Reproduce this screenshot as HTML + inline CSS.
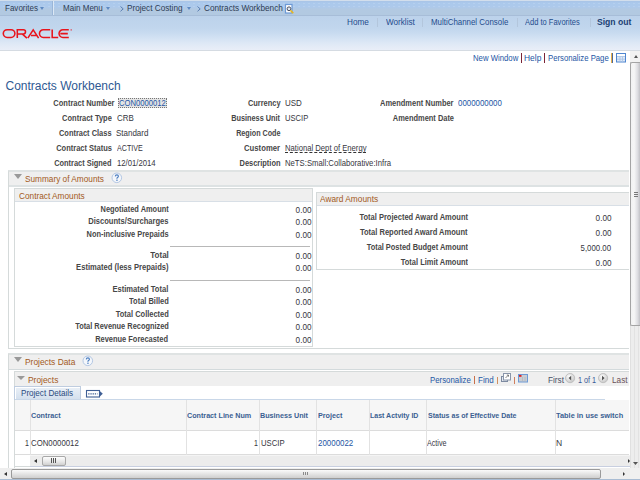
<!DOCTYPE html>
<html><head><meta charset="utf-8">
<style>
*{margin:0;padding:0;box-sizing:border-box}
html,body{width:640px;height:480px;overflow:hidden;background:#fff;font-family:"Liberation Sans",sans-serif}
.t{position:absolute;white-space:nowrap;line-height:1}
.r{position:absolute}
</style></head><body>
<div class="r" style="left:0px;top:0px;width:640px;height:16px;background:linear-gradient(#d2deec 0,#d2deec 1px,#a8c4e6 1px,#abc9ec 3px,#adc9eb 7px,#b2c9e2 9px,#b2c9e1 15px,#a7bdd8 15px,#a7bdd8 16px)"></div>
<div class="r" style="left:0px;top:3px;width:640px;height:1px;background:repeating-linear-gradient(90deg,transparent 0,transparent 3px,rgba(255,255,255,0.12) 3px,rgba(255,255,255,0.12) 5px)"></div>
<div class="r" style="left:0px;top:6px;width:640px;height:1px;background:repeating-linear-gradient(90deg,transparent 0,transparent 3px,rgba(255,255,255,0.12) 3px,rgba(255,255,255,0.12) 5px)"></div>
<div class="r" style="left:0px;top:16px;width:640px;height:34px;background:linear-gradient(#bcd2eb 0,#c1d6ed 35%,#c8dbf0 50%,#d3e2f3 65%,#dfe9f6 82%,#e9eef8 100%)"></div>
<div class="r" style="left:0px;top:50px;width:640px;height:1px;background:#d5dbe2"></div>
<div class="t" style="left:4.60px;top:4px;font-size:9px;color:#2e3d55;font-weight:normal;letter-spacing:0px;transform:scaleX(0.892);transform-origin:left;">Favorites</div>
<svg class="r" style="left:40px;top:7px" width="4" height="3"><path d="M0 0H4L2.0 3Z" fill="#5f8ac2"/></svg>
<div class="r" style="left:52px;top:1px;width:1px;height:14px;background:#9ab6d8"></div>
<div class="r" style="left:53px;top:1px;width:1px;height:14px;background:#dce8f5"></div>
<div class="t" style="left:63.40px;top:4px;font-size:9px;color:#2e3d55;font-weight:normal;letter-spacing:0px;transform:scaleX(0.894);transform-origin:left;">Main Menu</div>
<svg class="r" style="left:106px;top:7px" width="4" height="3"><path d="M0 0H4L2.0 3Z" fill="#5f8ac2"/></svg>
<svg class="r" style="left:120px;top:6px" width="5" height="6"><path d="M0.5 0.5L3.2 2.9L0.5 5.3" fill="none" stroke="#5a7fb2" stroke-width="1"/></svg>
<div class="t" style="left:127.39px;top:4px;font-size:9px;color:#2e3d55;font-weight:normal;letter-spacing:0px;transform:scaleX(0.91);transform-origin:left;">Project Costing</div>
<svg class="r" style="left:187px;top:7px" width="4" height="3"><path d="M0 0H4L2.0 3Z" fill="#5f8ac2"/></svg>
<svg class="r" style="left:197px;top:6px" width="5" height="6"><path d="M0.5 0.5L3.2 2.9L0.5 5.3" fill="none" stroke="#5a7fb2" stroke-width="1"/></svg>
<div class="t" style="left:204.29px;top:4px;font-size:9px;color:#2e3d55;font-weight:normal;letter-spacing:0px;transform:scaleX(0.913);transform-origin:left;">Contracts Workbench</div>
<svg class="r" style="left:284px;top:3px" width="11" height="11"><rect x="1.5" y="1.5" width="6.5" height="8.5" fill="#fff" stroke="#6d9ad6" stroke-width="1.2"/><circle cx="5" cy="5.8" r="1.9" fill="#dfe6ef" stroke="#4a5060" stroke-width="1"/><path d="M6.5 7.4L9.3 10.2" stroke="#e8b820" stroke-width="1.6"/></svg>
<svg class="r" style="left:0;top:26px" width="76" height="14" viewBox="0 26 76 14">
<g fill="none" stroke="#e8141c" stroke-width="1.55">
<rect x="3.3" y="29.7" width="11.6" height="7.7" rx="3.85"/>
<path d="M17.3 38.1V29.7H23.4A2.1 2.1 0 0 1 23.4 33.9H17.3M22.2 33.9L26.9 38.1"/>
<path d="M27.8 38.1L33.2 29.8L38.6 38.1M31 35.4H36.4"/>
<path d="M50.2 29.7H43.3A3.85 3.85 0 0 0 43.3 37.4H50.2"/>
<path d="M52.2 29.4V37.4H58.2"/>
<path d="M68.8 29.7H62.9A3.85 3.85 0 0 0 62.9 37.4H68.8M60.3 33.6H67.8"/>
</g><circle cx="71.2" cy="29.9" r="0.8" fill="#e8141c" opacity="0.6"/></svg>
<div class="t" style="left:347.09px;top:18px;font-size:9px;color:#1f4c8c;font-weight:normal;letter-spacing:0px;transform:scaleX(0.908);transform-origin:left;">Home</div>
<div class="r" style="left:377px;top:18px;width:1px;height:9px;background:#b3c6dc"></div>
<div class="t" style="left:385.59px;top:18px;font-size:9px;color:#1f4c8c;font-weight:normal;letter-spacing:0px;transform:scaleX(0.905);transform-origin:left;">Worklist</div>
<div class="r" style="left:422px;top:18px;width:1px;height:9px;background:#b3c6dc"></div>
<div class="t" style="left:431.10px;top:18px;font-size:9px;color:#1f4c8c;font-weight:normal;letter-spacing:0px;transform:scaleX(0.878);transform-origin:left;">MultiChannel Console</div>
<div class="r" style="left:517px;top:18px;width:1px;height:9px;background:#b3c6dc"></div>
<div class="t" style="left:525.12px;top:18px;font-size:9px;color:#1f4c8c;font-weight:normal;letter-spacing:0px;transform:scaleX(0.836);transform-origin:left;">Add to Favorites</div>
<div class="r" style="left:590px;top:18px;width:1px;height:9px;background:#b3c6dc"></div>
<div class="t" style="left:597.07px;top:18px;font-size:9px;color:#1b3f73;font-weight:bold;letter-spacing:0px;transform:scaleX(0.954);transform-origin:left;">Sign out</div>
<div class="t" style="left:472.91px;top:54px;font-size:9px;color:#2456a4;font-weight:normal;letter-spacing:0px;transform:scaleX(0.862);transform-origin:left;">New Window</div>
<div class="r" style="left:521px;top:53px;width:1px;height:10px;background:#7a2436"></div>
<div class="t" style="left:523.58px;top:54px;font-size:9px;color:#2456a4;font-weight:normal;letter-spacing:0px;transform:scaleX(0.937);transform-origin:left;">Help</div>
<div class="r" style="left:544px;top:53px;width:1px;height:10px;background:#7a2436"></div>
<div class="t" style="left:547.61px;top:54px;font-size:9px;color:#2456a4;font-weight:normal;letter-spacing:0px;transform:scaleX(0.861);transform-origin:left;">Personalize Page</div>
<div class="r" style="left:611px;top:53px;width:1px;height:10px;background:#e8b04a"></div>
<div class="r" style="left:612px;top:53px;width:1px;height:10px;background:#4a6aa0"></div>
<svg class="r" style="left:615px;top:52px" width="12" height="11"><rect x="1.5" y="1.5" width="9" height="8.5" fill="#dde8f6" stroke="#4f86d0"/><rect x="2" y="2" width="8" height="2" fill="#fff"/><path d="M2 4.5H10M5 4.5V10M7.5 4.5V10M2 7.2H10" stroke="#a9c3e6" stroke-width="0.8"/></svg>
<div class="r" style="left:630px;top:51px;width:10px;height:418px;background:#ededed;border-left:1px solid #e0e0e0"></div>
<div class="r" style="left:630px;top:51px;width:10px;height:11px;background:#f2f2f2"></div>
<svg class="r" style="left:633.5px;top:55px" width="4" height="3"><path d="M0 3H4L2.0 0Z" fill="#555"/></svg>
<div class="r" style="left:630px;top:62px;width:10px;height:264px;background:linear-gradient(90deg,#f2f2f2 0,#f6f6f6 35%,#dcdce0 75%,#c2c2c6 100%);border:1px solid #a4a4a4;border-right:none;border-radius:2px 0 0 2px"></div>
<div class="r" style="left:634px;top:192px;width:4px;height:1px;background:#777"></div>
<div class="r" style="left:634px;top:194px;width:4px;height:1px;background:#777"></div>
<div class="r" style="left:634px;top:196px;width:4px;height:1px;background:#777"></div>
<div class="r" style="left:634px;top:326px;width:1px;height:142px;background:#e2e2e2"></div>
<div class="r" style="left:638px;top:326px;width:1px;height:142px;background:#e2e2e2"></div>
<svg class="r" style="left:633px;top:462px" width="5" height="3"><path d="M0 0H5L2.5 3Z" fill="#555"/></svg>
<div class="t" style="left:5.50px;top:80px;font-size:12px;color:#2f5993;font-weight:normal;letter-spacing:0px;">Contracts Workbench</div>
<div class="t" style="right:525.63px;top:99px;font-size:9px;color:#474747;font-weight:bold;letter-spacing:0px;transform:scaleX(0.832);transform-origin:right;">Contract Number</div>
<div class="t" style="right:528.13px;top:114px;font-size:9px;color:#474747;font-weight:bold;letter-spacing:0px;transform:scaleX(0.831);transform-origin:right;">Contract Type</div>
<div class="t" style="right:528.13px;top:129px;font-size:9px;color:#474747;font-weight:bold;letter-spacing:0px;transform:scaleX(0.827);transform-origin:right;">Contract Class</div>
<div class="t" style="right:528.13px;top:144px;font-size:9px;color:#474747;font-weight:bold;letter-spacing:0px;transform:scaleX(0.833);transform-origin:right;">Contract Status</div>
<div class="t" style="right:528.13px;top:159px;font-size:9px;color:#474747;font-weight:bold;letter-spacing:0px;transform:scaleX(0.825);transform-origin:right;">Contract Signed</div>
<div class="r" style="left:118px;top:98px;width:49px;height:10px;background:#e4e4e4;border:1px dotted #777"></div>
<div class="t" style="left:119.12px;top:99px;font-size:9px;color:#2456a4;font-weight:normal;letter-spacing:0px;transform:scaleX(0.85);transform-origin:left;">CON0000012</div>
<div class="t" style="left:116.60px;top:114px;font-size:9px;color:#363640;font-weight:normal;letter-spacing:0px;transform:scaleX(0.883);transform-origin:left;">CRB</div>
<div class="t" style="left:116.40px;top:129px;font-size:9px;color:#363640;font-weight:normal;letter-spacing:0px;transform:scaleX(0.887);transform-origin:left;">Standard</div>
<div class="t" style="left:116.64px;top:144px;font-size:9px;color:#363640;font-weight:normal;letter-spacing:0px;transform:scaleX(0.791);transform-origin:left;">ACTIVE</div>
<div class="t" style="left:117.01px;top:159px;font-size:9px;color:#363640;font-weight:normal;letter-spacing:0px;transform:scaleX(0.858);transform-origin:left;">12/01/2014</div>
<div class="t" style="right:359.73px;top:99px;font-size:9px;color:#474747;font-weight:bold;letter-spacing:0px;transform:scaleX(0.824);transform-origin:right;">Currency</div>
<div class="t" style="right:359.73px;top:114px;font-size:9px;color:#474747;font-weight:bold;letter-spacing:0px;transform:scaleX(0.814);transform-origin:right;">Business Unit</div>
<div class="t" style="right:359.74px;top:129px;font-size:9px;color:#474747;font-weight:bold;letter-spacing:0px;transform:scaleX(0.799);transform-origin:right;">Region Code</div>
<div class="t" style="right:359.71px;top:144px;font-size:9px;color:#474747;font-weight:bold;letter-spacing:0px;transform:scaleX(0.856);transform-origin:right;">Customer</div>
<div class="t" style="right:359.73px;top:159px;font-size:9px;color:#474747;font-weight:bold;letter-spacing:0px;transform:scaleX(0.827);transform-origin:right;">Description</div>
<div class="t" style="left:285.10px;top:99px;font-size:9px;color:#363640;font-weight:normal;letter-spacing:0px;transform:scaleX(0.889);transform-origin:left;">USD</div>
<div class="t" style="left:285.12px;top:114px;font-size:9px;color:#363640;font-weight:normal;letter-spacing:0px;transform:scaleX(0.845);transform-origin:left;">USCIP</div>
<div class="t" style="left:285.12px;top:144px;font-size:9px;color:#363640;font-weight:normal;letter-spacing:0px;transform:scaleX(0.853);transform-origin:left;">National Dept of Energy</div>
<div class="r" style="left:285px;top:152px;width:81px;height:1px;border-top:1px dashed #333"></div>
<div class="t" style="left:285.11px;top:159px;font-size:9px;color:#363640;font-weight:normal;letter-spacing:0px;transform:scaleX(0.858);transform-origin:left;">NeTS:Small:Collaborative:Infra</div>
<div class="t" style="right:186.43px;top:99px;font-size:9px;color:#474747;font-weight:bold;letter-spacing:0px;transform:scaleX(0.83);transform-origin:right;">Amendment Number</div>
<div class="t" style="right:186.43px;top:114px;font-size:9px;color:#474747;font-weight:bold;letter-spacing:0px;transform:scaleX(0.827);transform-origin:right;">Amendment Date</div>
<div class="t" style="left:458.21px;top:99px;font-size:9px;color:#2456a4;font-weight:normal;letter-spacing:0px;transform:scaleX(0.877);transform-origin:left;">0000000000</div>
<div class="r" style="left:8px;top:170px;width:621px;height:179px;border-left:1px solid #d5dada;border-top:2px solid #dfe3e3;border-bottom:1px solid #d5dada"></div>
<div class="r" style="left:9px;top:172px;width:620px;height:15px;background:#efefef;border-bottom:2px solid #dde2e3"></div>
<div class="t" style="left:14px;top:174px;width:0;height:0;border-left:4px solid transparent;border-right:4px solid transparent;border-top:5px solid #999"></div>
<div class="t" style="left:25.39px;top:175px;font-size:9px;color:#a2591c;font-weight:normal;letter-spacing:0px;transform:scaleX(0.917);transform-origin:left;">Summary of Amounts</div>
<svg class="r" style="left:111px;top:172px" width="12" height="12"><circle cx="5.8" cy="5.8" r="4.8" fill="#f4f7fb" stroke="#b4c8e4" stroke-width="1"/><path d="M4.3 4.4Q4.4 2.9 5.9 2.9Q7.4 2.9 7.4 4.2Q7.4 5 6.5 5.5Q5.9 5.9 5.9 6.7" fill="none" stroke="#4d7fc0" stroke-width="1.2"/><rect x="5.3" y="7.6" width="1.3" height="1.3" fill="#4d7fc0"/></svg>
<div class="r" style="left:14px;top:188px;width:299px;height:159px;border:1px solid #d5dada"></div>
<div class="r" style="left:15px;top:189px;width:297px;height:13px;background:#efefef;border-bottom:1px solid #d8dfe6"></div>
<div class="t" style="left:18.89px;top:192px;font-size:9px;color:#a2591c;font-weight:normal;letter-spacing:0px;transform:scaleX(0.919);transform-origin:left;">Contract Amounts</div>
<div class="t" style="right:471.63px;top:205px;font-size:9px;color:#474747;font-weight:bold;letter-spacing:0px;transform:scaleX(0.824);transform-origin:right;">Negotiated Amount</div>
<div class="t" style="right:328.49px;top:206px;font-size:9px;color:#363640;font-weight:normal;letter-spacing:0px;transform:scaleX(0.908);transform-origin:right;">0.00</div>
<div class="t" style="right:471.62px;top:217px;font-size:9px;color:#474747;font-weight:bold;letter-spacing:0px;transform:scaleX(0.841);transform-origin:right;">Discounts/Surcharges</div>
<div class="t" style="right:328.49px;top:218px;font-size:9px;color:#363640;font-weight:normal;letter-spacing:0px;transform:scaleX(0.908);transform-origin:right;">0.00</div>
<div class="t" style="right:471.63px;top:230px;font-size:9px;color:#474747;font-weight:bold;letter-spacing:0px;transform:scaleX(0.823);transform-origin:right;">Non-inclusive Prepaids</div>
<div class="t" style="right:328.49px;top:231px;font-size:9px;color:#363640;font-weight:normal;letter-spacing:0px;transform:scaleX(0.908);transform-origin:right;">0.00</div>
<div class="t" style="right:471.60px;top:251px;font-size:9px;color:#474747;font-weight:bold;letter-spacing:0px;transform:scaleX(0.893);transform-origin:right;">Total</div>
<div class="t" style="right:328.49px;top:252px;font-size:9px;color:#363640;font-weight:normal;letter-spacing:0px;transform:scaleX(0.908);transform-origin:right;">0.00</div>
<div class="t" style="right:471.62px;top:263px;font-size:9px;color:#474747;font-weight:bold;letter-spacing:0px;transform:scaleX(0.844);transform-origin:right;">Estimated (less Prepaids)</div>
<div class="t" style="right:328.49px;top:264px;font-size:9px;color:#363640;font-weight:normal;letter-spacing:0px;transform:scaleX(0.908);transform-origin:right;">0.00</div>
<div class="t" style="right:471.62px;top:285px;font-size:9px;color:#474747;font-weight:bold;letter-spacing:0px;transform:scaleX(0.843);transform-origin:right;">Estimated Total</div>
<div class="t" style="right:328.49px;top:286px;font-size:9px;color:#363640;font-weight:normal;letter-spacing:0px;transform:scaleX(0.908);transform-origin:right;">0.00</div>
<div class="t" style="right:471.63px;top:297px;font-size:9px;color:#474747;font-weight:bold;letter-spacing:0px;transform:scaleX(0.831);transform-origin:right;">Total Billed</div>
<div class="t" style="right:328.49px;top:298px;font-size:9px;color:#363640;font-weight:normal;letter-spacing:0px;transform:scaleX(0.908);transform-origin:right;">0.00</div>
<div class="t" style="right:471.63px;top:310px;font-size:9px;color:#474747;font-weight:bold;letter-spacing:0px;transform:scaleX(0.831);transform-origin:right;">Total Collected</div>
<div class="t" style="right:328.49px;top:311px;font-size:9px;color:#363640;font-weight:normal;letter-spacing:0px;transform:scaleX(0.908);transform-origin:right;">0.00</div>
<div class="t" style="right:471.63px;top:322px;font-size:9px;color:#474747;font-weight:bold;letter-spacing:0px;transform:scaleX(0.823);transform-origin:right;">Total Revenue Recognized</div>
<div class="t" style="right:328.49px;top:323px;font-size:9px;color:#363640;font-weight:normal;letter-spacing:0px;transform:scaleX(0.908);transform-origin:right;">0.00</div>
<div class="t" style="right:471.63px;top:335px;font-size:9px;color:#474747;font-weight:bold;letter-spacing:0px;transform:scaleX(0.828);transform-origin:right;">Revenue Forecasted</div>
<div class="t" style="right:328.49px;top:336px;font-size:9px;color:#363640;font-weight:normal;letter-spacing:0px;transform:scaleX(0.908);transform-origin:right;">0.00</div>
<div class="r" style="left:170px;top:246px;width:140px;height:1px;background:#b8b8b8"></div>
<div class="r" style="left:170px;top:280px;width:140px;height:1px;background:#b8b8b8"></div>
<div class="r" style="left:316px;top:192px;width:313px;height:78px;border-left:1px solid #d5dada;border-top:1px solid #d5dada;border-bottom:1px solid #d5dada"></div>
<div class="r" style="left:317px;top:193px;width:312px;height:13px;background:#efefef;border-bottom:1px solid #d8dfe6"></div>
<div class="t" style="left:319.88px;top:195px;font-size:9px;color:#a2591c;font-weight:normal;letter-spacing:0px;transform:scaleX(0.925);transform-origin:left;">Award Amounts</div>
<div class="t" style="right:172.32px;top:213px;font-size:9px;color:#474747;font-weight:bold;letter-spacing:0px;transform:scaleX(0.835);transform-origin:right;">Total Projected Award Amount</div>
<div class="t" style="right:28.89px;top:214px;font-size:9px;color:#363640;font-weight:normal;letter-spacing:0px;transform:scaleX(0.908);transform-origin:right;">0.00</div>
<div class="t" style="right:172.32px;top:228px;font-size:9px;color:#474747;font-weight:bold;letter-spacing:0px;transform:scaleX(0.837);transform-origin:right;">Total Reported Award Amount</div>
<div class="t" style="right:28.89px;top:229px;font-size:9px;color:#363640;font-weight:normal;letter-spacing:0px;transform:scaleX(0.908);transform-origin:right;">0.00</div>
<div class="t" style="right:172.33px;top:243px;font-size:9px;color:#474747;font-weight:bold;letter-spacing:0px;transform:scaleX(0.824);transform-origin:right;">Total Posted Budget Amount</div>
<div class="t" style="right:28.91px;top:244px;font-size:9px;color:#363640;font-weight:normal;letter-spacing:0px;transform:scaleX(0.87);transform-origin:right;">5,000.00</div>
<div class="t" style="right:172.33px;top:258px;font-size:9px;color:#474747;font-weight:bold;letter-spacing:0px;transform:scaleX(0.83);transform-origin:right;">Total Limit Amount</div>
<div class="t" style="right:28.89px;top:259px;font-size:9px;color:#363640;font-weight:normal;letter-spacing:0px;transform:scaleX(0.908);transform-origin:right;">0.00</div>
<div class="r" style="left:8px;top:353px;width:621px;height:116px;border-left:1px solid #d5dada;border-top:2px solid #dfe3e3"></div>
<div class="r" style="left:9px;top:355px;width:620px;height:15px;background:#efefef;border-bottom:1px solid #d3dadc"></div>
<div class="t" style="left:14px;top:357px;width:0;height:0;border-left:4px solid transparent;border-right:4px solid transparent;border-top:5px solid #999"></div>
<div class="t" style="left:25.08px;top:358px;font-size:9px;color:#a2591c;font-weight:normal;letter-spacing:0px;transform:scaleX(0.932);transform-origin:left;">Projects Data</div>
<svg class="r" style="left:82px;top:355px" width="12" height="12"><circle cx="5.8" cy="5.8" r="4.8" fill="#f4f7fb" stroke="#b4c8e4" stroke-width="1"/><path d="M4.3 4.4Q4.4 2.9 5.9 2.9Q7.4 2.9 7.4 4.2Q7.4 5 6.5 5.5Q5.9 5.9 5.9 6.7" fill="none" stroke="#4d7fc0" stroke-width="1.2"/><rect x="5.3" y="7.6" width="1.3" height="1.3" fill="#4d7fc0"/></svg>
<div class="r" style="left:14px;top:371px;width:615px;height:97px;border-left:1px solid #d5dada;border-top:1px solid #d5dada"></div>
<div class="r" style="left:15px;top:372px;width:614px;height:14px;background:#efefef"></div>
<div class="t" style="left:17px;top:376px;width:0;height:0;border-left:4px solid transparent;border-right:4px solid transparent;border-top:4px solid #999"></div>
<div class="t" style="left:28.08px;top:376px;font-size:9px;color:#a2591c;font-weight:normal;letter-spacing:0px;transform:scaleX(0.933);transform-origin:left;">Projects</div>
<div class="t" style="left:429.71px;top:376px;font-size:9px;color:#2456a4;font-weight:normal;letter-spacing:0px;transform:scaleX(0.869);transform-origin:left;">Personalize</div>
<div class="r" style="left:474px;top:376px;width:1px;height:8px;background:#c8704a"></div>
<div class="t" style="left:478.00px;top:376px;font-size:9px;color:#2456a4;font-weight:normal;letter-spacing:0px;transform:scaleX(0.891);transform-origin:left;">Find</div>
<div class="r" style="left:497px;top:377px;width:1px;height:7px;background:#d09060"></div>
<svg class="r" style="left:500px;top:372px" width="12" height="11"><rect x="1.5" y="4.5" width="6" height="5" fill="#e4e8ee" stroke="#7d8aa0"/><rect x="3.5" y="1.5" width="7" height="6.5" fill="#fff" stroke="#8a96aa"/><path d="M5.5 6L8.5 3M6.8 3H8.5V4.7" fill="none" stroke="#666" stroke-width="0.8"/></svg>
<div class="r" style="left:514px;top:377px;width:1px;height:7px;background:#d08060"></div>
<svg class="r" style="left:517px;top:373px" width="12" height="10"><rect x="1.5" y="1.5" width="9" height="7.5" fill="#c9cdd3" stroke="#6d9ad6"/><rect x="2" y="2" width="2.5" height="1.8" fill="#e02020"/><path d="M5.5 4V8.5M8 4V8.5" stroke="#b3b8c0" stroke-width="0.8"/></svg>
<div class="t" style="left:547.59px;top:376px;font-size:9px;color:#4a4f66;font-weight:normal;letter-spacing:0px;transform:scaleX(0.916);transform-origin:left;">First</div>
<svg class="r" style="left:565px;top:373px" width="11" height="11"><defs><radialGradient id="pg565" cx="0.4" cy="0.35" r="0.7"><stop offset="0" stop-color="#fff"/><stop offset="1" stop-color="#c4c4c4"/></radialGradient></defs><circle cx="5.1" cy="5.1" r="4.6" fill="url(#pg565)" stroke="#b8b8b8" stroke-width="0.8"/><path d="M6.2 2.8V7.4L3.6 5.1Z" fill="#555"/></svg>
<div class="t" style="left:578.24px;top:376px;font-size:9px;color:#3a5a98;font-weight:normal;letter-spacing:0px;transform:scaleX(0.804);transform-origin:left;">1 of 1</div>
<svg class="r" style="left:598px;top:373px" width="11" height="11"><defs><radialGradient id="pg598" cx="0.4" cy="0.35" r="0.7"><stop offset="0" stop-color="#fff"/><stop offset="1" stop-color="#c4c4c4"/></radialGradient></defs><circle cx="5.1" cy="5.1" r="4.6" fill="url(#pg598)" stroke="#b8b8b8" stroke-width="0.8"/><path d="M4 2.8V7.4L6.6 5.1Z" fill="#555"/></svg>
<div class="t" style="left:611.59px;top:376px;font-size:9px;color:#6a5058;font-weight:normal;letter-spacing:0px;transform:scaleX(0.912);transform-origin:left;">Last</div>
<div class="r" style="left:14px;top:386px;width:67px;height:14px;background:linear-gradient(#eaf0f7,#d3dfed);border:1px solid #bfcde0;border-bottom:none;box-shadow:inset 1px 1px 0 #fff"></div>
<div class="t" style="left:21.30px;top:389px;font-size:9px;color:#2a4a80;font-weight:normal;letter-spacing:0px;transform:scaleX(0.898);transform-origin:left;">Project Details</div>
<svg class="r" style="left:85px;top:389px" width="19" height="10"><rect x="1.5" y="1.5" width="13" height="6.5" fill="#fff" stroke="#3f5f95" stroke-width="1.1"/><path d="M3.2 4.8H12.5" stroke="#3f5f95" stroke-width="1.3" stroke-dasharray="1.3 0.9"/><path d="M14 1.2L17.8 4.75L14 8.3Z" fill="#3f5f95"/></svg>
<div class="r" style="left:15px;top:399px;width:590px;height:1px;background:#c9d7e8"></div>
<div class="r" style="left:15px;top:400px;width:614px;height:31px;background:#f6f6f6;border-bottom:1px solid #dcdcdc"></div>
<div class="r" style="left:15px;top:431px;width:614px;height:24px;background:#fff;border-bottom:1px solid #dcdcdc"></div>
<div class="r" style="left:30px;top:400px;width:1px;height:55px;background:#e2e2e2"></div>
<div class="r" style="left:186px;top:400px;width:1px;height:55px;background:#e2e2e2"></div>
<div class="r" style="left:259px;top:400px;width:1px;height:55px;background:#e2e2e2"></div>
<div class="r" style="left:316px;top:400px;width:1px;height:55px;background:#e2e2e2"></div>
<div class="r" style="left:369px;top:400px;width:1px;height:55px;background:#e2e2e2"></div>
<div class="r" style="left:426px;top:400px;width:1px;height:55px;background:#e2e2e2"></div>
<div class="r" style="left:555px;top:400px;width:1px;height:55px;background:#e2e2e2"></div>
<div class="t" style="left:31.14px;top:412px;font-size:8px;color:#3b5f92;font-weight:bold;letter-spacing:0px;transform:scaleX(0.901);transform-origin:left;">Contract</div>
<div class="t" style="left:186.64px;top:412px;font-size:8px;color:#3b5f92;font-weight:bold;letter-spacing:0px;transform:scaleX(0.897);transform-origin:left;">Contract Line Num</div>
<div class="t" style="left:260.34px;top:412px;font-size:8px;color:#3b5f92;font-weight:bold;letter-spacing:0px;transform:scaleX(0.9);transform-origin:left;">Business Unit</div>
<div class="t" style="left:317.64px;top:412px;font-size:8px;color:#3b5f92;font-weight:bold;letter-spacing:0px;transform:scaleX(0.902);transform-origin:left;">Project</div>
<div class="t" style="left:370.15px;top:412px;font-size:8px;color:#3b5f92;font-weight:bold;letter-spacing:0px;transform:scaleX(0.876);transform-origin:left;">Last Actvity ID</div>
<div class="t" style="left:427.65px;top:412px;font-size:8px;color:#3b5f92;font-weight:bold;letter-spacing:0px;transform:scaleX(0.881);transform-origin:left;">Status as of Effective Date</div>
<div class="t" style="left:556.03px;top:412px;font-size:8px;color:#3b5f92;font-weight:bold;letter-spacing:0px;transform:scaleX(0.923);transform-origin:left;">Table in use switch</div>
<div class="t" style="right:610.95px;top:439px;font-size:9px;color:#363640;font-weight:normal;letter-spacing:0px;transform:scaleX(0.778);transform-origin:right;">1</div>
<div class="t" style="left:31.11px;top:439px;font-size:9px;color:#363640;font-weight:normal;letter-spacing:0px;transform:scaleX(0.868);transform-origin:left;">CON0000012</div>
<div class="t" style="right:381.95px;top:439px;font-size:9px;color:#363640;font-weight:normal;letter-spacing:0px;transform:scaleX(0.778);transform-origin:right;">1</div>
<div class="t" style="left:261.31px;top:439px;font-size:9px;color:#363640;font-weight:normal;letter-spacing:0px;transform:scaleX(0.857);transform-origin:left;">USCIP</div>
<div class="t" style="left:317.60px;top:439px;font-size:9px;color:#2456a4;font-weight:normal;letter-spacing:0px;transform:scaleX(0.881);transform-origin:left;">20000022</div>
<div class="t" style="left:427.14px;top:439px;font-size:9px;color:#363640;font-weight:normal;letter-spacing:0px;transform:scaleX(0.794);transform-origin:left;">Active</div>
<div class="t" style="left:555.97px;top:439px;font-size:9px;color:#363640;font-weight:normal;letter-spacing:0px;transform:scaleX(0.946);transform-origin:left;">N</div>
<div class="r" style="left:14px;top:466px;width:16px;height:1px;background:#d5dada"></div>
<div class="r" style="left:30px;top:455px;width:600px;height:12px;background:#ececec;border-bottom:1px solid #c8cfe0;border-top:1px solid #f4f4f4"></div>
<svg class="r" style="left:34px;top:459px" width="3" height="4"><path d="M3 0V4L0 2.0Z" fill="#333"/></svg>
<div class="r" style="left:42px;top:456px;width:24px;height:10px;background:linear-gradient(#fdfdfd,#e6e6e6 60%,#d0d0d0);border:1px solid #a8a8a8;border-radius:2px"></div>
<div class="r" style="left:51px;top:458px;width:1px;height:5px;background:#555"></div>
<div class="r" style="left:53px;top:458px;width:1px;height:5px;background:#555"></div>
<div class="r" style="left:55px;top:458px;width:1px;height:5px;background:#555"></div>
<svg class="r" style="left:628px;top:459px" width="2" height="4"><path d="M0 0V4L2 2.0Z" fill="#333"/></svg>
<div class="r" style="left:0px;top:468px;width:640px;height:12px;background:#eeeeee"></div>
<svg class="r" style="left:4px;top:472px" width="3" height="4"><path d="M3 0V4L0 2.0Z" fill="#333"/></svg>
<div class="r" style="left:11px;top:469px;width:590px;height:10px;background:linear-gradient(#fafafa,#e4e4e4 50%,#cfcfcf);border:1px solid #9a9a9a;border-radius:2px"></div>
<svg class="r" style="left:623px;top:472px" width="2" height="4"><path d="M0 0V4L2 2.0Z" fill="#333"/></svg>
<div class="r" style="left:303px;top:472px;width:1px;height:3px;background:#8a8a8a"></div>
<div class="r" style="left:305px;top:472px;width:1px;height:3px;background:#8a8a8a"></div>
<div class="r" style="left:307px;top:472px;width:1px;height:3px;background:#8a8a8a"></div>
<div class="r" style="left:630px;top:468px;width:10px;height:12px;background:#f0f0f0"></div>
<div class="r" style="left:0px;top:479px;width:640px;height:1px;background:#a9bcd3"></div>
</body></html>
